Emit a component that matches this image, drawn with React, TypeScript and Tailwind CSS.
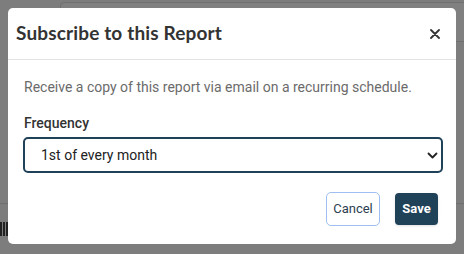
import { useState } from "react";

const frequencies = [
  "1st of every month",
  "Every Monday",
  "Every day",
  "Last day of every month",
];

const CloseIcon = () => (
  <svg width="10" height="10" viewBox="0 0 10 10" fill="none" stroke="#333" strokeWidth="1.8" strokeLinecap="round">
    <path d="M1 1l8 8M9 1L1 9" />
  </svg>
);

const Chevron = () => (
  <svg width="11" height="7" viewBox="0 0 11 7" fill="none" stroke="#222" strokeWidth="1.8" strokeLinecap="round" strokeLinejoin="round">
    <path d="M1.5 1.5l4 4 4-4" />
  </svg>
);

export default function App() {
  const [frequency, setFrequency] = useState(frequencies[0]);

  return (
    <div className="relative w-[464px] h-[254px] overflow-hidden bg-[#7d7d7d] p-2 font-['Roboto',sans-serif]">
      {/* dimmed page underneath */}
      <div className="absolute left-[60px] top-[2px] w-[420px] h-[40px] border border-[#6f6f6f] rounded-sm bg-[#808080]" />
      <div className="absolute left-0 top-[203px] w-full h-px bg-[#6f6f6f]" />
      <div className="absolute left-0 top-[222px] w-[8px] h-[14px] bg-[repeating-linear-gradient(90deg,#222_0_2px,#7d7d7d_2px_3px)]" />

      <div className="relative flex flex-col w-[448px] h-[236px] bg-white rounded-[5px]">
        <div className="flex items-center justify-between h-[52px] pl-2 pr-[15px] border-b border-[#e3e3e3]">
          <h2 className="text-[19px] font-bold text-[#333] font-['Lato',sans-serif] tracking-[0.15px]">
            Subscribe to this Report
          </h2>
          <button className="flex items-center justify-center w-[12px] h-[12px]">
            <CloseIcon />
          </button>
        </div>

        <div className="flex flex-col pl-[15px] pr-[13px] pt-[18px]">
          <p className="text-[14px] leading-[18px] text-[#6b6b6b] pl-[1px]">
            Receive a copy of this report via email on a recurring schedule.
          </p>
          <label className="mt-[18px] text-[14px] leading-[18px] font-medium text-[#333] pl-[1px]">
            Frequency
          </label>
          <div className="relative mt-[5px]">
            <select
              value={frequency}
              onChange={(e) => setFrequency(e.target.value)}
              className="w-full h-[36px] appearance-none rounded-[5px] border-2 border-[#1f4259] bg-white pl-[16px] text-[14px] text-[#222] outline-none"
            >
              {frequencies.map((f) => (
                <option key={f}>{f}</option>
              ))}
            </select>
            <div className="absolute right-[5px] top-[15px] pointer-events-none">
              <Chevron />
            </div>
          </div>
        </div>

        <div className="flex justify-end items-center gap-[15px] pr-[18px] mt-[19px]">
          <button className="h-[34px] w-[54px] rounded-[5px] border border-[#9dbff2] bg-white text-[13px] text-[#2c3e50]">
            Cancel
          </button>
          <button className="h-[32px] w-[43px] rounded-[4px] bg-[#1f4259] text-[13px] font-bold text-white shadow-sm">
            Save
          </button>
        </div>
      </div>
    </div>
  );
}
